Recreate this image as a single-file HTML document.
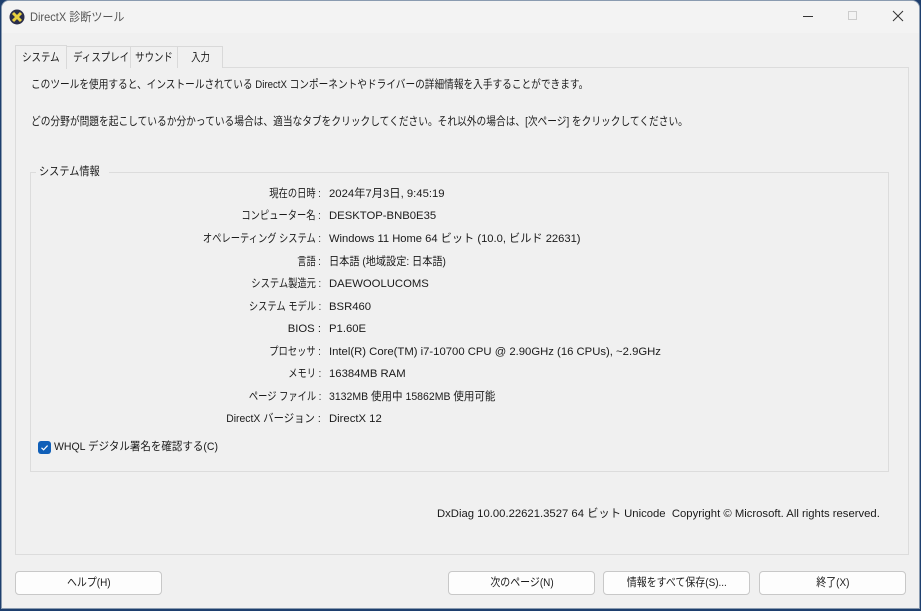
<!DOCTYPE html>
<html><head><meta charset="utf-8"><style>
*{margin:0;padding:0;box-sizing:border-box}
body{width:921px;height:611px;overflow:hidden;background:#1e3f6e;font-family:"Liberation Sans","Noto Sans CJK JP",sans-serif;font-size:11.3px;line-height:14px;color:#1a1a1a}
.win{position:absolute;left:1px;top:0;width:919px;height:609px;background:#f0f0f0;border:1px solid #8a9bb0;border-radius:8px 8px 0 0;overflow:hidden}
.title{position:absolute;left:0;top:0;right:0;height:32px;background:#f3f3f3}
.t{position:absolute;white-space:nowrap}
.tab{position:absolute;top:45px;height:22px;border:1px solid #d9d9d9;border-bottom:none;background:#f0f0f0;padding-top:4px;text-align:center;white-space:nowrap;overflow:hidden;font-size:11.5px}
.tab span{display:inline-block;transform:scaleX(.82)}
.panel{position:absolute;left:13px;top:66px;width:894px;height:488px;border:1px solid #dcdcdc;background:#f0f0f0}
.grp{position:absolute;left:28px;top:171px;width:859px;height:300px;border:1px solid #dcdcdc}
.lab{position:absolute;right:598px;white-space:nowrap;text-align:right;transform:scaleX(.82);transform-origin:right center}
.val{position:absolute;left:327px;white-space:nowrap;transform-origin:left center}
.btn{position:absolute;top:570px;height:24px;width:147px;background:#fdfdfd;border:1px solid #c8c8c8;border-radius:4px;text-align:center;line-height:22px;white-space:nowrap}
.btn span{display:inline-block;transform:scaleX(.88)}
.sx{transform-origin:left center}
</style></head><body>
<div class="win">
<div class="title">
<svg style="position:absolute;left:7px;top:8px" width="16" height="16" viewBox="0 0 16 16"><circle cx="8" cy="8" r="7.5" fill="#2a2d4a"/><path d="M4 4L12 12M12 4L4 12" stroke="#e8d040" stroke-width="3"/></svg>
<div class="t sx" style="left:28px;top:9px;color:#555;font-size:12px;transform:scaleX(.92)">DirectX 診断ツール</div>
<div style="position:absolute;left:801px;top:15px;width:10px;height:1px;background:#333"></div>
<div style="position:absolute;left:846px;top:10px;width:9px;height:9px;border:1px solid #ccc"></div>
<svg style="position:absolute;left:890px;top:9px" width="12" height="12"><path d="M1 1L11 11M11 1L1 11" stroke="#333" stroke-width="1"/></svg>
</div>
<div class="panel"></div>
<div class="tab" style="left:64px;width:65px"><span>ディスプレイ</span></div>
<div class="tab" style="left:128px;width:48px"><span>サウンド</span></div>
<div class="tab" style="left:175px;width:46px"><span>入力</span></div>
<div class="tab" style="left:13px;width:52px;top:44px;height:24px;padding-top:5px"><span>システム</span></div>
<div class="t sx" style="left:29px;top:77px;transform:scaleX(.856)">このツールを使用すると、インストールされている DirectX コンポーネントやドライバーの詳細情報を入手することができます。</div>
<div class="t sx" style="left:29px;top:114px;transform:scaleX(.86)">どの分野が問題を起こしているか分かっている場合は、適当なタブをクリックしてください。それ以外の場合は、[次ページ] をクリックしてください。</div>
<div class="grp"></div>
<div class="t" style="left:34px;top:164px;background:#f0f0f0;padding:0 3px"><span style="display:inline-block;transform:scaleX(.9);transform-origin:left center">システム情報</span></div>
<div class="lab" style="top:186px">現在の日時 :</div><div class="val" style="top:186px">2024年7月3日, 9:45:19</div>
<div class="lab" style="top:208px">コンピューター名 :</div><div class="val" style="top:208px">DESKTOP-BNB0E35</div>
<div class="lab" style="top:231px">オペレーティング システム :</div><div class="val" style="top:231px;transform:scaleX(.99)">Windows 11 Home 64 ビット (10.0, ビルド 22631)</div>
<div class="lab" style="top:254px">言語 :</div><div class="val" style="top:254px;transform:scaleX(.9)">日本語 (地域設定: 日本語)</div>
<div class="lab" style="top:276px">システム製造元 :</div><div class="val" style="top:276px">DAEWOOLUCOMS</div>
<div class="lab" style="top:299px">システム モデル :</div><div class="val" style="top:299px">BSR460</div>
<div class="lab" style="top:321px;transform:none">BIOS :</div><div class="val" style="top:321px">P1.60E</div>
<div class="lab" style="top:344px">プロセッサ :</div><div class="val" style="top:344px">Intel(R) Core(TM) i7-10700 CPU @ 2.90GHz (16 CPUs), ~2.9GHz</div>
<div class="lab" style="top:366px">メモリ :</div><div class="val" style="top:366px">16384MB RAM</div>
<div class="lab" style="top:389px">ページ ファイル :</div><div class="val" style="top:389px;transform:scaleX(.93)">3132MB 使用中 15862MB 使用可能</div>
<div class="lab" style="top:411px;transform:scaleX(.92)">DirectX バージョン :</div><div class="val" style="top:411px">DirectX 12</div>
<div style="position:absolute;left:36px;top:440px;width:13px;height:13px;background:#0f5fb8;border-radius:3px"></div>
<svg style="position:absolute;left:36px;top:440px" width="13" height="13"><path d="M3.5 6.8L5.6 8.8L9.6 4.6" stroke="#fff" stroke-width="1.2" fill="none"/></svg>
<div class="t sx" style="left:52px;top:439px;transform:scaleX(.93)">WHQL デジタル署名を確認する(C)</div>
<div class="t sx" style="left:435px;top:506px">DxDiag 10.00.22621.3527 64 ビット Unicode &nbsp;Copyright © Microsoft. All rights reserved.</div>
<div class="btn" style="left:13px"><span>ヘルプ(H)</span></div>
<div class="btn" style="left:446px"><span>次のページ(N)</span></div>
<div class="btn" style="left:601px"><span>情報をすべて保存(S)...</span></div>
<div class="btn" style="left:757px"><span>終了(X)</span></div>
</div>
</body></html>
